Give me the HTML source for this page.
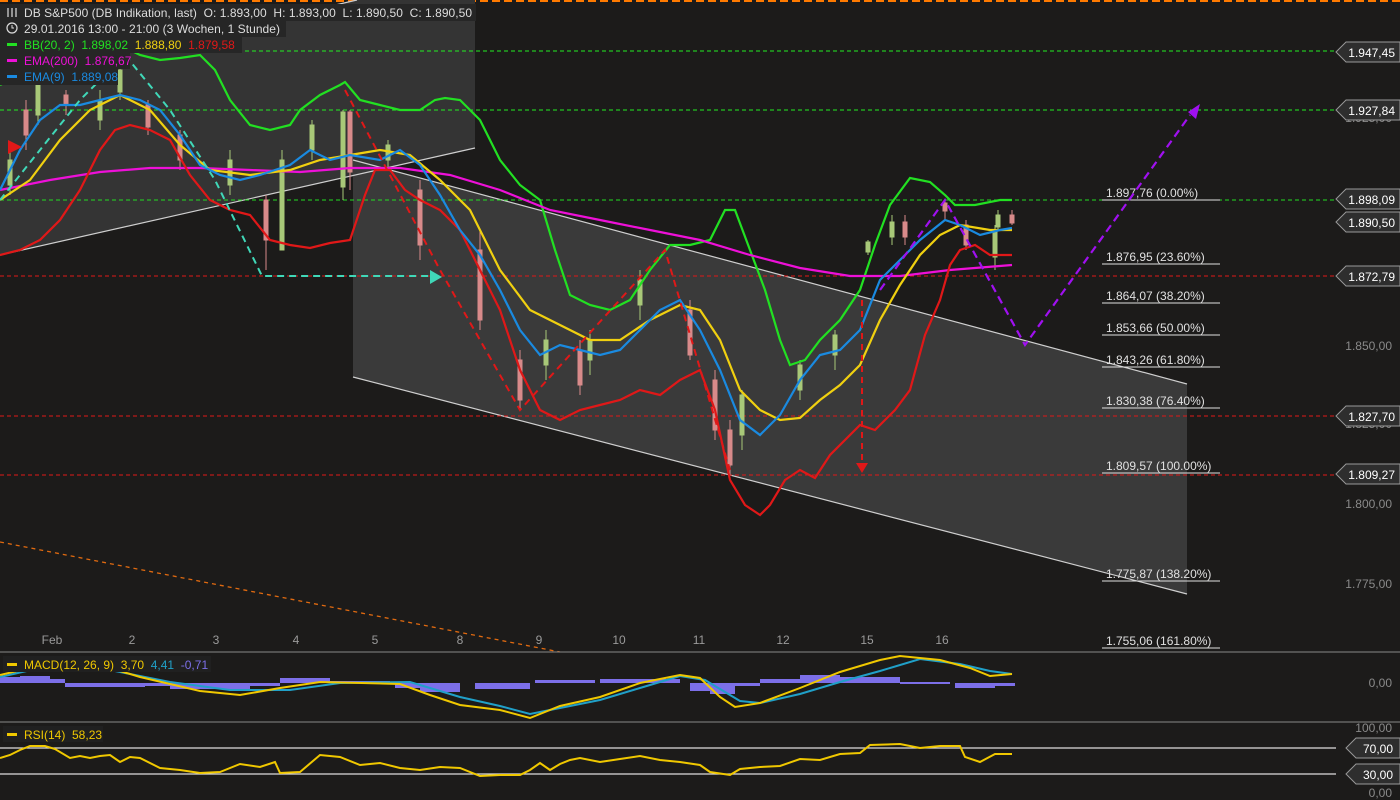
<!DOCTYPE html>
<html><head><meta charset="utf-8"><style>
html,body{margin:0;padding:0;background:#1c1b1a;}
svg{display:block;font-family:"Liberation Sans",sans-serif;}
text{white-space:pre;}
</style></head><body>
<svg width="1400" height="800" viewBox="0 0 1400 800" xmlns="http://www.w3.org/2000/svg">
<rect width="1400" height="800" fill="#1c1b1a"/>
<line x1="0" y1="1" x2="1400" y2="1" stroke="#ff7a00" stroke-width="2" stroke-dasharray="8,4"/>
<polygon points="0,82 357,0 475,0 475,148 0,255" fill="#343434"/>
<polygon points="353,160 1187,384 1187,594 353,377" fill="#3a3a3a"/>
<line x1="0" y1="82" x2="357" y2="0" stroke="#cfcfcf" stroke-width="1.2"/>
<line x1="0" y1="255" x2="475" y2="148" stroke="#cfcfcf" stroke-width="1.2"/>
<line x1="353" y1="160" x2="1187" y2="384" stroke="#cfcfcf" stroke-width="1.2"/>
<line x1="353" y1="377" x2="1187" y2="594" stroke="#cfcfcf" stroke-width="1.2"/>
<g stroke-width="1" stroke-dasharray="4,3">
<line x1="0" y1="51" x2="1336" y2="51" stroke="#22ee22"/>
<line x1="0" y1="110" x2="1336" y2="110" stroke="#22ee22"/>
<line x1="0" y1="200" x2="1336" y2="200" stroke="#22dd22"/>
<line x1="0" y1="276" x2="1336" y2="276" stroke="#e01818"/>
<line x1="0" y1="416" x2="1336" y2="416" stroke="#e01818"/>
<line x1="0" y1="475" x2="1336" y2="475" stroke="#e01818"/>
</g>
<line x1="0" y1="542" x2="560" y2="652" stroke="#e06a10" stroke-width="1.3" stroke-dasharray="4,4"/>
<!-- candles -->
<g stroke-width="1">
<g stroke="#a8c878" fill="#a8c878">
<line x1="10" y1="150" x2="10" y2="195"/><rect x="8" y="160" width="4" height="25"/>
<line x1="38" y1="80" x2="38" y2="125"/><rect x="36" y="85" width="4" height="30"/>
<line x1="100" y1="90" x2="100" y2="130"/><rect x="98" y="100" width="4" height="20"/>
<line x1="120" y1="60" x2="120" y2="100"/><rect x="118" y="70" width="4" height="22"/>
<line x1="230" y1="150" x2="230" y2="195"/><rect x="228" y="160" width="4" height="25"/>
<line x1="282" y1="150" x2="282" y2="250"/><rect x="280" y="160" width="4" height="90"/>
<line x1="312" y1="120" x2="312" y2="160"/><rect x="310" y="125" width="4" height="25"/>
<line x1="343" y1="110" x2="343" y2="200"/><rect x="341" y="112" width="4" height="75"/>
<line x1="388" y1="140" x2="388" y2="170"/><rect x="386" y="145" width="4" height="15"/>
<line x1="546" y1="330" x2="546" y2="380"/><rect x="544" y="340" width="4" height="25"/>
<line x1="590" y1="330" x2="590" y2="375"/><rect x="588" y="340" width="4" height="20"/>
<line x1="640" y1="270" x2="640" y2="320"/><rect x="638" y="280" width="4" height="25"/>
<line x1="742" y1="390" x2="742" y2="450"/><rect x="740" y="395" width="4" height="40"/>
<line x1="800" y1="360" x2="800" y2="400"/><rect x="798" y="365" width="4" height="25"/>
<line x1="835" y1="330" x2="835" y2="370"/><rect x="833" y="335" width="4" height="20"/>
<line x1="868" y1="240" x2="868" y2="255"/><rect x="866" y="242" width="4" height="10"/>
<line x1="892" y1="215" x2="892" y2="245"/><rect x="890" y="222" width="4" height="15"/>
<line x1="995" y1="225" x2="995" y2="270"/><rect x="993" y="232" width="4" height="25"/>
<line x1="998" y1="210" x2="998" y2="230"/><rect x="996" y="215" width="4" height="12"/>
</g>
<g stroke="#d88a8a" fill="#d88a8a">
<line x1="26" y1="100" x2="26" y2="150"/><rect x="24" y="110" width="4" height="25"/>
<line x1="66" y1="90" x2="66" y2="115"/><rect x="64" y="95" width="4" height="10"/>
<line x1="148" y1="100" x2="148" y2="135"/><rect x="146" y="105" width="4" height="22"/>
<line x1="180" y1="130" x2="180" y2="170"/><rect x="178" y="135" width="4" height="25"/>
<line x1="266" y1="195" x2="266" y2="270"/><rect x="264" y="200" width="4" height="40"/>
<line x1="350" y1="110" x2="350" y2="190"/><rect x="348" y="112" width="4" height="60"/>
<line x1="420" y1="180" x2="420" y2="260"/><rect x="418" y="190" width="4" height="55"/>
<line x1="480" y1="230" x2="480" y2="330"/><rect x="478" y="250" width="4" height="70"/>
<line x1="520" y1="350" x2="520" y2="410"/><rect x="518" y="360" width="4" height="40"/>
<line x1="580" y1="340" x2="580" y2="395"/><rect x="578" y="350" width="4" height="35"/>
<line x1="690" y1="300" x2="690" y2="360"/><rect x="688" y="310" width="4" height="45"/>
<line x1="715" y1="370" x2="715" y2="440"/><rect x="713" y="380" width="4" height="50"/>
<line x1="730" y1="420" x2="730" y2="475"/><rect x="728" y="430" width="4" height="35"/>
<line x1="905" y1="215" x2="905" y2="245"/><rect x="903" y="222" width="4" height="15"/>
<line x1="945" y1="200" x2="945" y2="220"/><rect x="943" y="203" width="4" height="8"/>
<line x1="966" y1="220" x2="966" y2="250"/><rect x="964" y="225" width="4" height="20"/>
<line x1="1012" y1="210" x2="1012" y2="225"/><rect x="1010" y="215" width="4" height="8"/>
</g></g>
<g fill="#e0e0e0" font-size="12">
<text x="1106" y="197">1.897,76 (0.00%)</text>
<text x="1106" y="261">1.876,95 (23.60%)</text>
<text x="1106" y="300">1.864,07 (38.20%)</text>
<text x="1106" y="332">1.853,66 (50.00%)</text>
<text x="1106" y="364">1.843,26 (61.80%)</text>
<text x="1106" y="405">1.830,38 (76.40%)</text>
<text x="1106" y="470">1.809,57 (100.00%)</text>
<text x="1106" y="578">1.775,87 (138.20%)</text>
<text x="1106" y="645">1.755,06 (161.80%)</text>
</g>
<g stroke="#e0e0e0" stroke-width="1">
<line x1="1102" y1="200" x2="1220" y2="200"/><line x1="1102" y1="264" x2="1220" y2="264"/>
<line x1="1102" y1="303" x2="1220" y2="303"/><line x1="1102" y1="335" x2="1220" y2="335"/>
<line x1="1102" y1="367" x2="1220" y2="367"/><line x1="1102" y1="408" x2="1220" y2="408"/>
<line x1="1102" y1="473" x2="1220" y2="473"/><line x1="1102" y1="581" x2="1220" y2="581"/>
<line x1="1102" y1="648" x2="1220" y2="648"/>
</g>
<g fill="#8a8a8a" font-size="12" text-anchor="end">
<text x="1392" y="122">1.925,00</text>
<text x="1392" y="350">1.850,00</text>
<text x="1392" y="428">1.825,00</text>
<text x="1392" y="508">1.800,00</text>
<text x="1392" y="588">1.775,00</text>
<text x="1392" y="687">0,00</text>
<text x="1392" y="732">100,00</text>
<text x="1392" y="797">0,00</text>
</g>
<polyline fill="none" stroke="#22e022" stroke-width="2.2" points="0,85 20,75 40,60 60,55 80,48 100,47 120,45 140,55 160,60 180,58 200,55 215,70 230,100 250,125 270,130 290,125 300,110 320,95 340,85 345,82 360,100 380,105 400,110 420,110 435,100 445,98 460,100 480,120 500,160 520,185 540,200 555,250 570,295 590,305 610,310 630,300 650,270 670,245 690,245 710,240 725,210 735,210 750,250 765,290 780,340 790,365 805,360 820,340 840,320 860,290 875,245 890,205 910,178 930,182 945,195 955,205 975,205 1000,200 1012,200"/>
<polyline fill="none" stroke="#ee10d8" stroke-width="2.2" points="0,190 50,180 100,172 150,168 200,168 250,170 300,172 350,168 400,168 450,175 500,190 550,210 600,220 650,230 700,240 750,255 800,268 850,276 900,276 950,270 1012,265"/>
<polyline fill="none" stroke="#e01818" stroke-width="2.2" points="0,255 20,250 40,240 60,220 80,190 100,150 115,130 130,125 150,130 170,140 190,175 210,200 230,210 250,215 270,240 290,245 310,248 330,243 350,240 365,195 375,170 390,170 405,190 420,200 440,210 460,230 480,270 500,310 520,370 540,410 560,420 580,410 600,405 620,400 640,390 660,395 680,380 700,370 715,410 730,480 745,505 760,515 770,505 785,480 800,470 815,478 830,455 845,440 860,425 875,430 895,410 910,390 925,335 940,300 950,265 960,250 975,245 990,255 1012,255"/>
<polyline fill="none" stroke="#f0d010" stroke-width="2.2" points="0,200 30,180 60,140 90,110 120,95 150,110 180,145 210,170 250,175 290,170 320,160 350,155 380,150 410,155 440,180 470,210 500,270 530,310 560,325 590,340 620,340 650,320 680,305 700,310 720,340 740,390 760,410 780,420 800,418 820,400 840,385 860,365 880,320 900,285 920,255 940,235 960,225 990,230 1012,230"/>
<polyline fill="none" stroke="#1a8ae0" stroke-width="2.2" points="0,190 20,150 40,120 60,105 80,105 100,100 120,95 140,100 160,110 180,135 200,165 220,175 240,180 260,175 290,165 310,150 330,160 350,155 380,160 400,150 420,165 440,195 460,230 480,255 500,290 520,330 540,355 560,345 580,350 600,355 620,350 640,330 660,310 680,300 700,330 720,370 740,420 760,435 780,415 800,380 820,355 840,350 860,330 880,280 900,260 920,240 945,220 960,225 980,235 1000,230 1012,228"/>
<polyline fill="none" stroke="#40d8b8" stroke-width="2" stroke-dasharray="7,5" points="0,200 40,150 80,100 125,55 170,110 215,180 262,276 430,276"/>
<polygon points="430,270 442,277 430,284" fill="#40d8b8"/>
<polyline fill="none" stroke="#e01818" stroke-width="2" stroke-dasharray="7,5" points="345,90 440,270 520,410 665,250 730,470"/>
<line x1="862" y1="300" x2="862" y2="465" stroke="#e01818" stroke-width="2" stroke-dasharray="6,5"/>
<polygon points="856,463 868,463 862,473" fill="#e01818"/>
<polygon points="8,140 22,147 8,154" fill="#e01818"/>
<polyline fill="none" stroke="#a010f0" stroke-width="2.2" stroke-dasharray="8,5" points="880,290 945,200 1025,345 1190,115"/>
<polygon points="1188,112 1200,104 1196,119" fill="#a010f0"/>
<g font-size="12" fill="#fff">
<g stroke="#999" fill="#2e2e2e">
<polygon points="1336,52 1346,42 1400,42 1400,62 1346,62"/>
<polygon points="1336,110 1346,100 1400,100 1400,120 1346,120"/>
<polygon points="1336,199 1346,189 1400,189 1400,209 1346,209"/>
<polygon points="1336,222 1346,212 1400,212 1400,232 1346,232"/>
<polygon points="1336,276 1346,266 1400,266 1400,286 1346,286"/>
<polygon points="1336,416 1346,406 1400,406 1400,426 1346,426"/>
<polygon points="1336,474 1346,464 1400,464 1400,484 1346,484"/>
<polygon points="1346,748 1356,738 1400,738 1400,758 1356,758"/>
<polygon points="1346,774 1356,764 1400,764 1400,784 1356,784"/>
</g>
<g text-anchor="end">
<text x="1395" y="57">1.947,45</text><text x="1395" y="115">1.927,84</text>
<text x="1395" y="204">1.898,09</text><text x="1395" y="227">1.890,50</text>
<text x="1395" y="281">1.872,79</text><text x="1395" y="421">1.827,70</text>
<text x="1395" y="479">1.809,27</text><text x="1393" y="753">70,00</text>
<text x="1393" y="779">30,00</text>
</g></g>
<g fill="#9a9a9a" font-size="12" text-anchor="middle">
<text x="52" y="644">Feb</text><text x="132" y="644">2</text><text x="216" y="644">3</text><text x="296" y="644">4</text><text x="375" y="644">5</text><text x="460" y="644">8</text><text x="539" y="644">9</text><text x="619" y="644">10</text><text x="699" y="644">11</text><text x="783" y="644">12</text><text x="867" y="644">15</text><text x="942" y="644">16</text>
</g>
<line x1="0" y1="652" x2="1400" y2="652" stroke="#888" stroke-width="1"/>
<line x1="0" y1="722" x2="1400" y2="722" stroke="#888" stroke-width="1"/>
<g fill="#7c6fe8">
<rect x="0" y="677" width="20" height="6"/><rect x="20" y="676" width="30" height="7"/><rect x="50" y="679" width="15" height="4"/>
<rect x="65" y="683" width="80" height="4"/><rect x="145" y="683" width="25" height="3"/><rect x="170" y="683" width="80" height="6"/><rect x="250" y="683" width="30" height="3"/>
<rect x="280" y="678" width="50" height="5"/><rect x="330" y="681" width="60" height="2"/><rect x="395" y="683" width="25" height="5"/><rect x="420" y="683" width="40" height="9"/>
<rect x="475" y="683" width="55" height="6"/><rect x="535" y="680" width="60" height="3"/><rect x="600" y="679" width="80" height="4"/>
<rect x="690" y="683" width="20" height="8"/><rect x="710" y="683" width="25" height="11"/><rect x="735" y="683" width="25" height="3"/><rect x="760" y="679" width="40" height="4"/>
<rect x="800" y="675" width="40" height="8"/><rect x="840" y="677" width="60" height="6"/><rect x="900" y="682" width="50" height="2"/><rect x="955" y="683" width="40" height="5"/><rect x="995" y="683" width="20" height="3"/>
</g>
<polyline fill="none" stroke="#20a0c8" stroke-width="2" points="0,677 40,668 70,666 110,670 170,682 230,690 290,690 340,683 410,682 460,697 500,706 530,714 560,708 600,700 640,688 680,676 705,680 740,701 760,703 800,694 840,682 880,671 920,659 960,664 990,671 1012,674"/>
<polyline fill="none" stroke="#f0c800" stroke-width="2" points="0,675 30,668 60,662 100,665 140,677 200,691 240,695 280,688 320,682 400,684 430,695 460,705 500,710 530,718 560,706 600,697 640,683 680,675 700,678 720,697 735,707 760,703 800,688 840,672 880,660 900,656 940,660 970,668 990,676 1012,674"/>
<line x1="0" y1="748" x2="1336" y2="748" stroke="#ddd" stroke-width="1.2"/>
<line x1="0" y1="774" x2="1336" y2="774" stroke="#ddd" stroke-width="1.2"/>
<polyline fill="none" stroke="#f0c800" stroke-width="2" points="0,758 10,755 20,750 30,746 45,746 55,749 70,758 80,756 90,758 100,756 110,755 120,762 130,757 140,758 160,768 180,770 200,773 220,772 240,764 260,767 275,762 280,773 300,772 320,755 340,757 360,765 380,763 400,768 420,770 440,767 460,768 480,776 500,775 520,775 530,770 540,763 550,770 560,764 570,760 580,758 600,762 620,759 640,756 660,760 680,762 700,765 710,772 730,775 740,769 760,767 780,766 800,759 820,760 840,754 860,753 870,745 900,744 920,748 940,746 960,746 965,757 980,762 995,754 1012,754"/>
<g font-size="12">
<rect x="0" y="4" width="476" height="17" fill="#262626"/>
<rect x="0" y="21" width="286" height="16" fill="#262626"/>
<rect x="0" y="37" width="242" height="16" fill="#262626"/>
<rect x="0" y="53" width="130" height="16" fill="#262626"/>
<rect x="0" y="69" width="118" height="16" fill="#262626"/>
<text x="24" y="17" fill="#ddd" textLength="448" lengthAdjust="spacing">DB S&amp;P500 (DB Indikation, last)  O: 1.893,00  H: 1.893,00  L: 1.890,50  C: 1.890,50</text>
<g stroke="#ddd" stroke-width="1.2"><line x1="8" y1="8" x2="8" y2="17"/><line x1="12" y1="8" x2="12" y2="17"/><line x1="16" y1="8" x2="16" y2="17"/></g>
<circle cx="12" cy="28" r="5" fill="none" stroke="#ddd" stroke-width="1.2"/><path d="M12 25v3h2" stroke="#ddd" fill="none"/>
<text x="24" y="33" fill="#ddd" textLength="256" lengthAdjust="spacing">29.01.2016 13:00 - 21:00 (3 Wochen, 1 Stunde)</text>
<rect x="7" y="43" width="10" height="3" fill="#22e022"/><text x="24" y="49" fill="#22e022">BB(20, 2)  1.898,02  <tspan fill="#f0d010">1.888,80</tspan>  <tspan fill="#e01818">1.879,58</tspan></text>
<rect x="7" y="59" width="10" height="3" fill="#ee10d8"/><text x="24" y="65" fill="#ee10d8">EMA(200)  1.876,67</text>
<rect x="7" y="75" width="10" height="3" fill="#1a8ae0"/><text x="24" y="81" fill="#1a8ae0">EMA(9)  1.889,08</text>
<rect x="3" y="656" width="208" height="16" fill="#202020"/>
<rect x="7" y="663" width="10" height="3" fill="#f0c800"/><text x="24" y="669" fill="#f0c800">MACD(12, 26, 9)  3,70  <tspan fill="#20a0c8">4,41</tspan>  <tspan fill="#7c6fe8">-0,71</tspan></text>
<rect x="3" y="726" width="100" height="16" fill="#202020"/>
<rect x="7" y="733" width="10" height="3" fill="#f0c800"/><text x="24" y="739" fill="#f0c800">RSI(14)  58,23</text>
</g>
</svg>
</body></html>
